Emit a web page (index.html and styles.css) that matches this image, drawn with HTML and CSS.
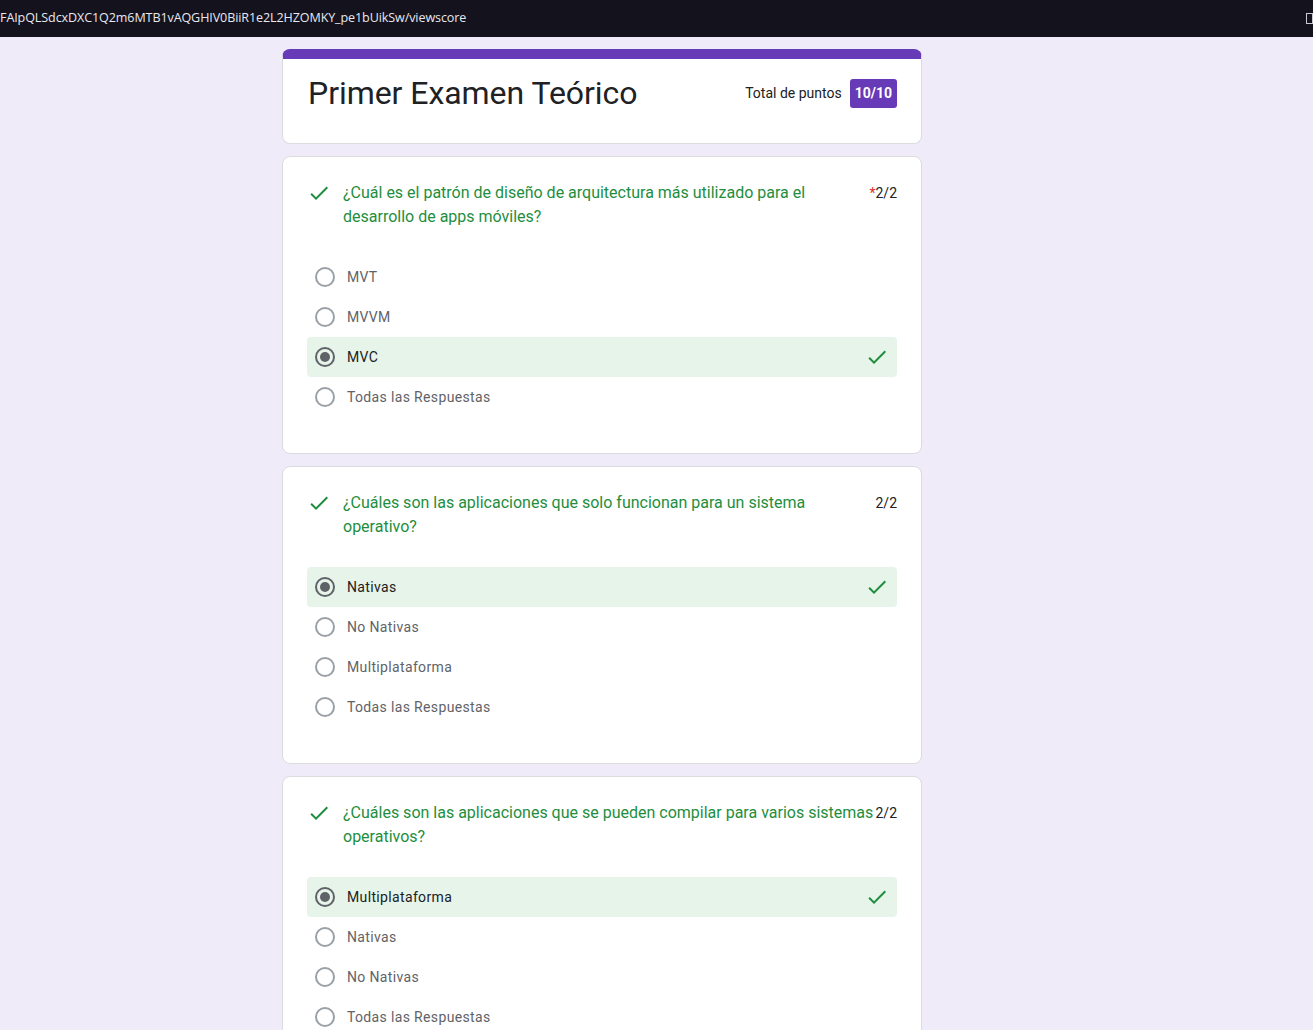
FILE: index.html
```html
<!DOCTYPE html>
<html lang="es">
<head>
<meta charset="utf-8">
<title>Primer Examen Teórico</title>
<link rel="stylesheet" href="styles.css">
</head>
<body>
<div class="topbar">
  <span class="url">FAIpQLSdcxDXC1Q2m6MTB1vAQGHIV0BiiR1e2L2HZOMKY_pe1bUikSw/viewscore</span>
  <span class="topicon"></span>
</div>
<main class="page">
  <section class="card header">
    <h1 class="title">Primer Examen Teórico</h1>
    <div class="total">
      <span class="total-label">Total de puntos</span>
      <span class="badge">10/10</span>
    </div>
  </section>

  <section class="card question">
    <div class="qhead">
      <svg class="qcheck" viewBox="0 0 24 24" width="24" height="24"><path d="M9 16.17L4.83 12l-1.42 1.41L9 19 21 7l-1.41-1.41z"/></svg>
      <div class="qtext">¿Cuál es el patrón de diseño de arquitectura más utilizado para el desarrollo de apps móviles?</div>
      <div class="points"><span class="req">*</span>2/2</div>
    </div>
    <div class="options">
      <div class="opt"><span class="radio"></span><span class="label">MVT</span></div>
      <div class="opt"><span class="radio"></span><span class="label">MVVM</span></div>
      <div class="opt correct"><span class="radio checked"></span><span class="label">MVC</span><svg class="ocheck" viewBox="0 0 24 24" width="24" height="24"><path d="M9 16.17L4.83 12l-1.42 1.41L9 19 21 7l-1.41-1.41z"/></svg></div>
      <div class="opt"><span class="radio"></span><span class="label">Todas las Respuestas</span></div>
    </div>
  </section>

  <section class="card question">
    <div class="qhead">
      <svg class="qcheck" viewBox="0 0 24 24" width="24" height="24"><path d="M9 16.17L4.83 12l-1.42 1.41L9 19 21 7l-1.41-1.41z"/></svg>
      <div class="qtext">¿Cuáles son las aplicaciones que solo funcionan para un sistema operativo?</div>
      <div class="points">2/2</div>
    </div>
    <div class="options">
      <div class="opt correct"><span class="radio checked"></span><span class="label">Nativas</span><svg class="ocheck" viewBox="0 0 24 24" width="24" height="24"><path d="M9 16.17L4.83 12l-1.42 1.41L9 19 21 7l-1.41-1.41z"/></svg></div>
      <div class="opt"><span class="radio"></span><span class="label">No Nativas</span></div>
      <div class="opt"><span class="radio"></span><span class="label">Multiplataforma</span></div>
      <div class="opt"><span class="radio"></span><span class="label">Todas las Respuestas</span></div>
    </div>
  </section>

  <section class="card question">
    <div class="qhead">
      <svg class="qcheck" viewBox="0 0 24 24" width="24" height="24"><path d="M9 16.17L4.83 12l-1.42 1.41L9 19 21 7l-1.41-1.41z"/></svg>
      <div class="qtext">¿Cuáles son las aplicaciones que se pueden compilar para varios sistemas operativos?</div>
      <div class="points">2/2</div>
    </div>
    <div class="options">
      <div class="opt correct"><span class="radio checked"></span><span class="label">Multiplataforma</span><svg class="ocheck" viewBox="0 0 24 24" width="24" height="24"><path d="M9 16.17L4.83 12l-1.42 1.41L9 19 21 7l-1.41-1.41z"/></svg></div>
      <div class="opt"><span class="radio"></span><span class="label">Nativas</span></div>
      <div class="opt"><span class="radio"></span><span class="label">No Nativas</span></div>
      <div class="opt"><span class="radio"></span><span class="label">Todas las Respuestas</span></div>
    </div>
  </section>
</main>
</body>
</html>
```

FILE: styles.css
```css
* { box-sizing: border-box; }

html, body {
  margin: 0;
  padding: 0;
}

body {
  background: #f0ebf8;
  font-family: Roboto, "Liberation Sans", Arial, sans-serif;
  color: #202124;
}

.topbar {
  height: 37px;
  background: #13121d;
  display: flex;
  align-items: center;
  justify-content: space-between;
  padding: 0 0 2px 0;
}

.url {
  font-family: "Open Sans", "DejaVu Sans", sans-serif;
  font-size: 12.55px;
  color: #e8e8ee;
  letter-spacing: -0.1px;
}

.topicon {
  width: 7px;
  height: 11px;
  border: 1px solid #c9c9d6;
  margin-right: 0;
  margin-top: 2px;
}

.page {
  padding: 12px 0 40px 282px;
  display: flex;
  flex-direction: column;
  gap: 12px;
}

.card {
  width: 640px;
  background: #fff;
  border: 1px solid #dadce0;
  border-radius: 8px;
}

.header {
  border-top: 10px solid #673ab7;
  padding: 14px 24px 30px 25px;
  display: flex;
  align-items: center;
  justify-content: space-between;
}

.title {
  margin: 0;
  font-size: 32px;
  line-height: 40px;
  font-weight: 400;
  color: #202124;
  letter-spacing: -0.05px;
}

.total {
  display: flex;
  align-items: center;
  gap: 8px;
  font-size: 14px;
}

.total-label {
  color: #202124;
}

.badge {
  background: #673ab7;
  color: #fff;
  font-weight: 700;
  font-size: 14px;
  line-height: 29px;
  padding: 0 5px;
  border-radius: 3px;
}

.question {
  padding: 24px 24px 36px 24px;
}

.qhead {
  display: flex;
  align-items: flex-start;
}

.qcheck {
  flex: none;
  fill: #1e8e3e;
  margin-right: 12px;
}

.qtext {
  flex: 1;
  font-size: 16px;
  line-height: 24px;
  color: #1e8e3e;
  letter-spacing: 0;
}

.points {
  flex: none;
  font-size: 14px;
  line-height: 24px;
  color: #202124;
  margin-left: 2px;
}

.req {
  color: #d93025;
}

.options {
  margin-top: 28px;
}

.opt {
  height: 40px;
  display: flex;
  align-items: center;
  padding: 0 8px;
  border-radius: 4px;
}

.opt.correct {
  background: #e6f4ea;
}

.radio {
  flex: none;
  width: 20px;
  height: 20px;
  border: 2px solid #9aa0a6;
  border-radius: 50%;
  margin-right: 12px;
  position: relative;
}

.radio.checked {
  border-color: #5f6368;
}

.radio.checked::after {
  content: "";
  position: absolute;
  left: 3px;
  top: 3px;
  width: 10px;
  height: 10px;
  border-radius: 50%;
  background: #5f6368;
}

.label {
  flex: 1;
  font-size: 14px;
  color: #5f6368;
  letter-spacing: 0.35px;
}

.opt.correct .label {
  color: #202124;
}

.ocheck {
  flex: none;
  fill: #1e8e3e;
}
```
